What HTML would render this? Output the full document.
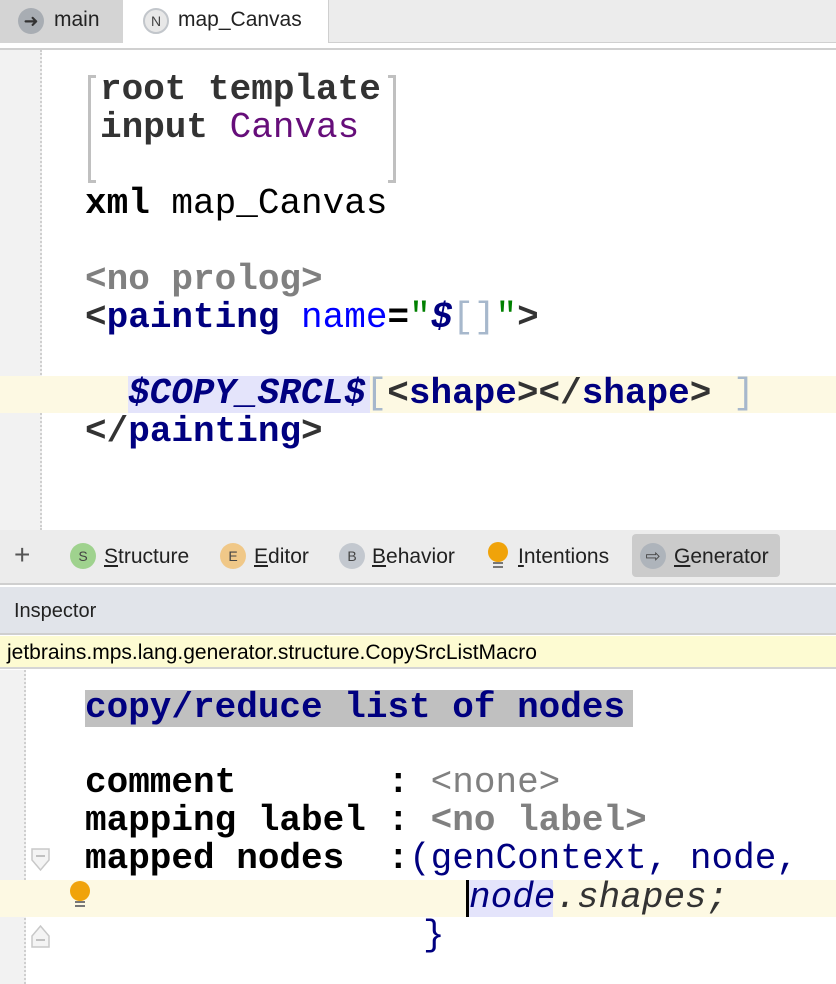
<!DOCTYPE html>
<html><head><meta charset="utf-8"><style>
*{margin:0;padding:0;box-sizing:border-box}
body{width:836px;height:984px;position:relative;background:#fff;overflow:hidden;font-family:"Liberation Sans",sans-serif}
.abs{position:absolute}
.code{position:absolute;font-family:"Liberation Mono",monospace;font-size:36px;font-weight:bold;white-space:pre;line-height:38px;height:38px;color:#000}
.n{color:#000080}.g{color:#808080}.p{color:#660e7a;font-weight:normal}.d{color:#333}
.br{color:#a7b8cc;font-weight:normal}
.ui{font-size:21px;color:#222}
.ic{position:absolute;width:26px;height:26px;border-radius:13px;font-size:14px;text-align:center;line-height:26px;color:#444}
u{text-decoration:underline}
</style></head><body>
<div class="abs" style="left:0;top:0;width:836px;height:43px;background:#ececec;border-bottom:1px solid #d0d0d0"></div>
<div class="abs" style="left:0;top:0;width:123px;height:43px;background:#d4d4d4"></div>
<div class="abs" style="left:18px;top:8px;width:26px;height:26px;border-radius:13px;background:#a8adb3;color:#333;font-size:18px;text-align:center;line-height:26px">➜</div>
<div class="abs ui" style="left:54px;top:8px">main</div>
<div class="abs" style="left:123px;top:0;width:206px;height:44px;background:#fff;border-right:1px solid #cfcfcf"></div>
<div class="abs" style="left:143px;top:8px;width:26px;height:26px;border-radius:13px;border:2px solid #c2c6cb;background:#e8e8e8;font-size:14px;text-align:center;line-height:22px;color:#444">N</div>
<div class="abs ui" style="left:178px;top:8px">map_Canvas</div>
<div class="abs" style="left:0;top:43px;width:836px;height:5px;background:#fff"></div>
<div class="abs" style="left:0;top:48px;width:836px;height:2px;background:#d0d0d0"></div>
<div class="abs" style="left:0;top:50px;width:42px;height:480px;background:#f2f2f2;border-right:2px dotted #cfcfcf"></div>
<div class="abs" style="left:0;top:376px;width:836px;height:37px;background:#fdf9e3"></div>
<div class="abs" style="left:88px;top:75px;width:8px;height:108px;border:3px solid #c0c0c0;border-right:none"></div>
<div class="abs" style="left:388px;top:75px;width:8px;height:108px;border:3px solid #c0c0c0;border-left:none"></div>
<div class="code d" style="left:100px;top:71px">root template</div>
<div class="code d" style="left:100px;top:109px">input <span class="p">Canvas</span></div>
<div class="code" style="left:85px;top:185px">xml <span style="font-weight:normal">map_Canvas</span></div>
<div class="code g" style="left:85px;top:261px">&lt;no prolog&gt;</div>
<div class="code" style="left:85px;top:299px"><span class="d">&lt;</span><span class="n">painting</span> <span style="color:#0000ff;font-weight:normal">name</span>=<span style="color:#008000;font-weight:normal">"</span><span class="n" style="font-style:italic">$</span><span class="br">[]</span><span style="color:#008000;font-weight:normal">"</span><span class="d">&gt;</span></div>
<div class="abs" style="left:128px;top:376px;width:242px;height:37px;background:#e4e4fb"></div>
<div class="code" style="left:128px;top:375px"><span class="n" style="font-style:italic">$COPY_SRCL$</span><span class="br">[</span><span class="d">&lt;</span><span class="n">shape</span><span class="d">&gt;&lt;/</span><span class="n">shape</span><span class="d">&gt;</span> <span class="br">]</span></div>
<div class="code" style="left:85px;top:413px"><span class="d">&lt;/</span><span class="n">painting</span><span class="d">&gt;</span></div>
<div class="abs" style="left:0;top:530px;width:836px;height:55px;background:#ececec;border-bottom:2px solid #cfcfcf"></div>
<div class="abs" style="left:632px;top:534px;width:148px;height:43px;background:#cbcbcb;border-radius:4px"></div>
<div class="abs" style="left:14px;top:539px;font-size:28px;color:#555">+</div>
<div class="ic" style="left:70px;top:543px;background:#9fd28e">S</div>
<div class="abs ui" style="left:104px;top:545px"><u>S</u>tructure</div>
<div class="ic" style="left:220px;top:543px;background:#f0c888">E</div>
<div class="abs ui" style="left:254px;top:545px"><u>E</u>ditor</div>
<div class="ic" style="left:339px;top:543px;background:#c3c8cf">B</div>
<div class="abs ui" style="left:372px;top:545px"><u>B</u>ehavior</div>
<div class="abs" style="left:488px;top:542px;width:20px;height:20px;border-radius:10px;background:#f0a30a"></div>
<div class="abs" style="left:493px;top:562px;width:10px;height:2px;background:#777"></div>
<div class="abs" style="left:493px;top:566px;width:10px;height:2px;background:#777"></div>
<div class="abs ui" style="left:518px;top:545px"><u>I</u>ntentions</div>
<div class="ic" style="left:640px;top:543px;background:#aeb4bb;font-size:18px">⇨</div>
<div class="abs ui" style="left:674px;top:545px"><u>G</u>enerator</div>
<div class="abs" style="left:0;top:587px;width:836px;height:48px;background:#e1e4ea;border-bottom:2px solid #cfcfcf"></div>
<div class="abs ui" style="left:14px;top:600px;font-size:20px">Inspector</div>
<div class="abs" style="left:0;top:636px;width:836px;height:33px;background:#fdfbd2;border-bottom:2px solid #d5d5d5"></div>
<div class="abs ui" style="left:7px;top:641px;color:#000">jetbrains.mps.lang.generator.structure.CopySrcListMacro</div>
<div class="abs" style="left:0;top:670px;width:26px;height:314px;background:#f2f2f2;border-right:2px dotted #cfcfcf"></div>
<div class="abs" style="left:0;top:880px;width:836px;height:37px;background:#fdf9e3"></div>
<div class="abs" style="left:85px;top:690px;width:548px;height:37px;background:#c0c0c0"></div>
<div class="code n" style="left:85px;top:689px">copy/reduce list of nodes</div>
<div class="code" style="left:85px;top:764px">comment       : <span class="g" style="font-weight:normal">&lt;none&gt;</span></div>
<div class="code" style="left:85px;top:802px">mapping label : <span class="g">&lt;no label&gt;</span></div>
<div class="code" style="left:85px;top:840px">mapped nodes  :<span class="n" style="font-weight:normal">(genContext, node,</span></div>
<div class="abs" style="left:469px;top:880px;width:84px;height:37px;background:#e4e4fb"></div>
<div class="abs" style="left:466px;top:880px;width:3px;height:37px;background:#000"></div>
<div class="code" style="left:469px;top:879px;font-weight:normal;font-style:italic"><span class="n">node</span><span class="d">.shapes;</span></div>
<div class="code n" style="left:423px;top:917px;font-weight:normal">}</div>
<div class="abs" style="left:70px;top:881px;width:20px;height:20px;border-radius:10px;background:#f0a30a"></div>
<div class="abs" style="left:75px;top:901px;width:10px;height:2px;background:#777"></div>
<div class="abs" style="left:75px;top:905px;width:10px;height:2px;background:#777"></div>
<svg class="abs" style="left:30px;top:848px" width="22" height="24"><path d="M2 1H19V12L10.5 22L2 12Z" fill="#f4f4f4" stroke="#c8c8c8" stroke-width="1.5"/><path d="M6 8H15" stroke="#b0b0b0" stroke-width="1.5"/></svg>
<svg class="abs" style="left:30px;top:924px" width="22" height="24"><path d="M2 23H19V12L10.5 2L2 12Z" fill="#f4f4f4" stroke="#c8c8c8" stroke-width="1.5"/><path d="M6 16H15" stroke="#b0b0b0" stroke-width="1.5"/></svg>
</body></html>
